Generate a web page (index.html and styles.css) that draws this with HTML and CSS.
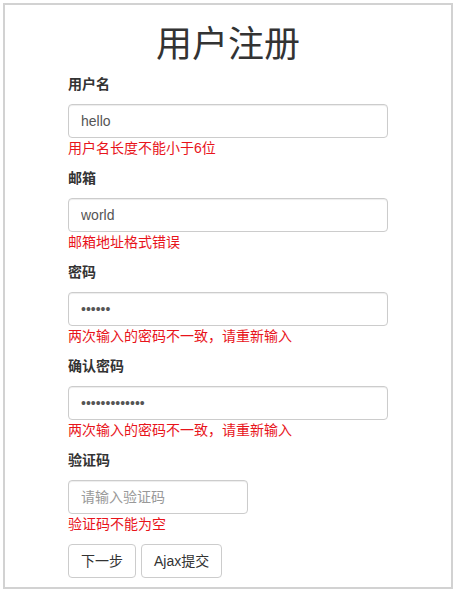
FILE: index.html
```html
<!DOCTYPE html>
<html lang="zh-CN">
<head>
<meta charset="utf-8">
<title>用户注册</title>
<link rel="stylesheet" href="styles.css">
</head>
<body>
<div class="box">
  <h1 class="title">用户注册</h1>
  <form class="form">
    <div class="group">
      <label class="label">用户名</label>
      <input class="control" type="text" value="hello">
      <div class="error">用户名长度不能小于6位</div>
    </div>
    <div class="group">
      <label class="label">邮箱</label>
      <input class="control" type="text" value="world">
      <div class="error">邮箱地址格式错误</div>
    </div>
    <div class="group">
      <label class="label">密码</label>
      <input class="control" type="password" value="123456">
      <div class="error">两次输入的密码不一致，请重新输入</div>
    </div>
    <div class="group">
      <label class="label">确认密码</label>
      <input class="control" type="password" value="1234567890123">
      <div class="error">两次输入的密码不一致，请重新输入</div>
    </div>
    <div class="group">
      <label class="label">验证码</label>
      <input class="control control-short" type="text" placeholder="请输入验证码">
      <div class="error">验证码不能为空</div>
    </div>
    <div class="actions">
      <button class="btn" type="button">下一步</button>
      <button class="btn" type="button">Ajax提交</button>
    </div>
  </form>
</div>
</body>
</html>
```
FILE: styles.css
```css
* {
  box-sizing: border-box;
}

html, body {
  margin: 0;
  padding: 0;
  background: #fff;
}

body {
  font-family: "Liberation Sans", "Noto Sans CJK SC", sans-serif;
  font-size: 14px;
  line-height: 20px;
  color: #333;
}

.box {
  margin: 3px 4px 0 3px;
  border: 2px solid #d2d2d2;
  padding: 0 0 9px;
}

.title {
  margin: 20px 0 10px;
  font-size: 36px;
  line-height: 39px;
  font-weight: 400;
  text-align: center;
  color: #333;
}

.form {
  width: 320px;
  margin: 0 auto;
}

.group {
  display: flex;
  flex-direction: column;
  align-items: flex-start;
  margin-bottom: 10px;
}

.label {
  font-weight: 700;
  line-height: 20px;
  margin-bottom: 10px;
}

.control {
  display: block;
  width: 320px;
  height: 34px;
  padding: 6px 12px;
  font-family: inherit;
  font-size: 14px;
  line-height: 20px;
  color: #555;
  background: #fff;
  border: 1px solid #ccc;
  border-radius: 4px;
  box-shadow: inset 0 1px 1px rgba(0, 0, 0, 0.075);
  outline: none;
}

.control::placeholder {
  color: #999;
}

.control-short {
  width: 180px;
}

.error {
  color: #e8141b;
  line-height: 20px;
}

.actions {
  display: flex;
  gap: 5px;
}

.btn {
  height: 34px;
  padding: 6px 12px;
  font-family: inherit;
  font-size: 14px;
  line-height: 20px;
  color: #333;
  background: #fff;
  border: 1px solid #ccc;
  border-radius: 4px;
  cursor: pointer;
}
```
